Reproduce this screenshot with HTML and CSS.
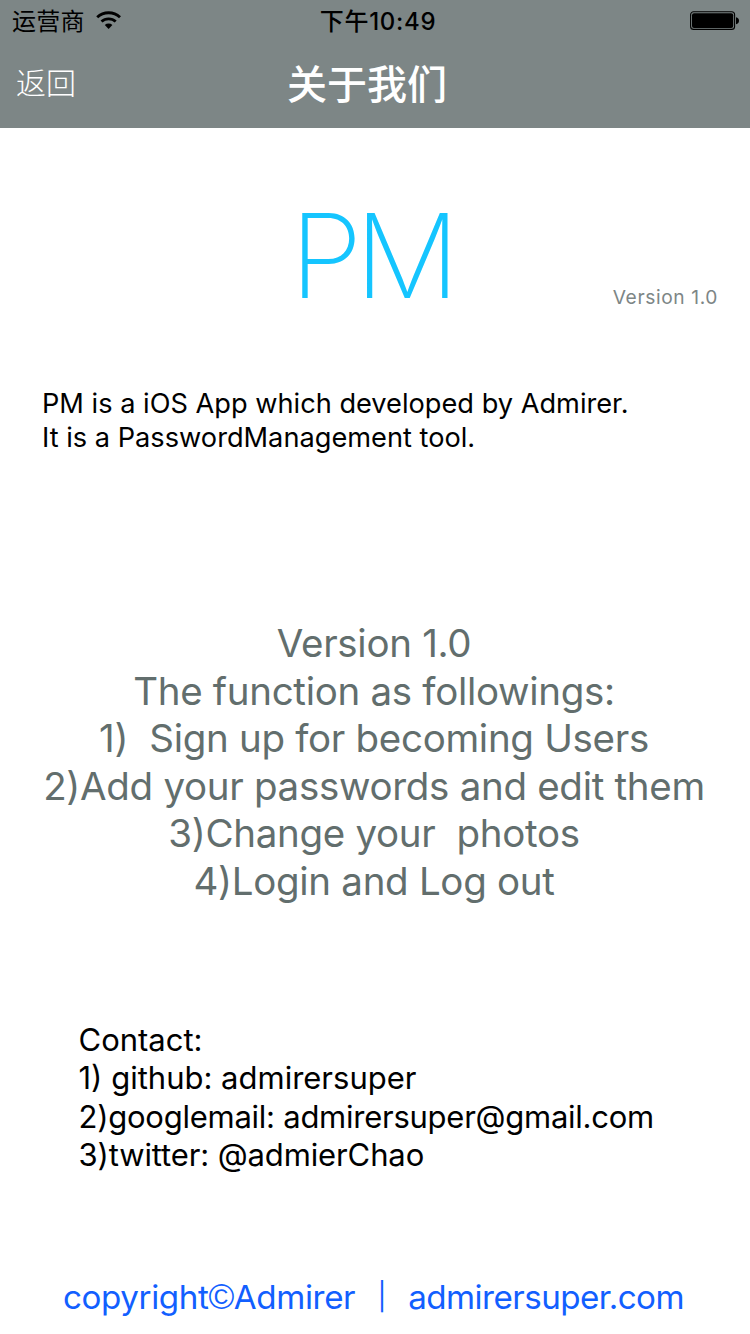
FILE: index.html
```html
<!DOCTYPE html>
<html lang="zh-CN">
<head>
<meta charset="utf-8">
<title>关于我们</title>
<link rel="stylesheet" href="styles.css">
</head>
<body>
<header class="header">
  <div class="status">
    <div class="carrier"><span class="carrier-name">运营商</span>
      <svg class="wifi" width="26" height="20" viewBox="0 0 26 20"><path d="M12.6 19 8.8 14.9a5.6 5.6 0 0 1 7.6 0z" fill="#000"/><path d="M5.5 11.6a10.4 10.4 0 0 1 14.2 0M1.2 7.3a16.6 16.6 0 0 1 22.8 0" fill="none" stroke="#000" stroke-width="2.8"/></svg>
    </div>
    <div class="time">下午10:49</div>
    <svg class="battery" width="50" height="20" viewBox="0 0 50 20"><rect x=".6" y=".8" width="44" height="17.6" rx="3" fill="none" stroke="#000" stroke-width="1.1"/><rect x="2" y="2.2" width="41.2" height="14.8" rx="2" fill="#000"/><path d="M46 6.2c4 .5 4 6.5 0 7z" fill="#000"/></svg>
  </div>
  <nav class="nav">
    <a class="back">返回</a>
    <h1 class="title">关于我们</h1>
  </nav>
</header>
<main class="page">
  <section class="brand">
    <h2 class="logo">PM</h2>
    <span class="version">Version 1.0</span>
  </section>
  <section class="intro"><p>PM is a iOS App which developed by Admirer.</p><p>It is a PasswordManagement tool.</p></section>
  <section class="features">
    <p>Version 1.0</p><p>The function as followings:</p><p>1)&nbsp; Sign up for becoming Users</p><p>2)Add your passwords and edit them</p><p>3)Change your&nbsp; photos</p><p>4)Login and Log out</p>
  </section>
  <section class="contact"><p>Contact:</p><p>1) github: admirersuper</p><p class="mail">2)googlemail: admirersuper@gmail.com</p><p class="twitter">3)twitter: @admierChao</p></section>
  <footer class="footer"><span class="copy">copyright<span class="mark">©</span>Admirer</span><span class="bar">|</span><span class="site">admirersuper.com</span></footer>
</main>
</body>
</html>
```
FILE: styles.css
```css
* { box-sizing: border-box; }
body { margin: 0; width: 750px; height: 1334px; overflow: hidden; background: #fff; color: #000; font-family: Inter, "Noto Sans CJK SC", sans-serif; }
p, h1, h2 { margin: 0; font-weight: 400; white-space: nowrap; }
.header { height: 128px; background: #7d8686; }
.status { height: 41px; display: grid; grid-template-columns: 1fr 1fr 1fr; align-items: center; padding: 0 10px 0 12px; }
.carrier { display: flex; align-items: center; gap: 11px; }
.carrier-name { font-size: 24px; line-height: 41px; letter-spacing: .3px; padding-top: 1px; }
.wifi { margin-top: -3px; }
.time { text-align: center; font-size: 24px; font-weight: 500; line-height: 41px; padding: 0 0 0 4px; letter-spacing: .7px; white-space: nowrap; }
.battery { justify-self: end; }
.nav { height: 87px; display: grid; grid-template-columns: 1fr auto 1fr; align-items: center; padding: 0 16px; color: #fff; }
.back { font-size: 30px; font-weight: 300; line-height: 84px; margin-top: -4px; }
.title { font-size: 40px; line-height: 84px; font-weight: 500; margin: 1px 8px 0 -8px; }
.brand { height: 192px; display: flex; padding: 75px 32px 0 290px; justify-content: space-between; }
.logo { font-size: 117px; font-weight: 200; line-height: 106px; letter-spacing: -7.5px; color: #15c5ff; }
.version { font-size: 19.2px; line-height: 24px; color: #7d8686; padding-top: 82px; letter-spacing: .6px; }
.intro { height: 230px; padding: 67px 42px 0; font-size: 27.2px; line-height: 34px; }
.features { height: 420px; padding: 70px 2px 0 0; color: #626e6d; font-size: 38.5px; line-height: 47.6px; letter-spacing: -.3px; text-align: center; }
.features p { margin: 0 -20px; }
.contact { height: 290px; padding: 51px 78.5px 0; font-size: 31px; line-height: 38.4px; }
.mail { letter-spacing: -.25px; }
.twitter { letter-spacing: -.12px; }
.footer { display: flex; align-items: center; height: 74px; padding-left: 63px; color: #125fff; font-size: 33.2px; line-height: 74px; letter-spacing: -.4px; white-space: nowrap; }
.mark { font-family: "Liberation Sans", sans-serif; font-size: 35px; }
.bar { width: 53px; font-size: 27px; text-align: center; }
.site { letter-spacing: -.55px; }
```
